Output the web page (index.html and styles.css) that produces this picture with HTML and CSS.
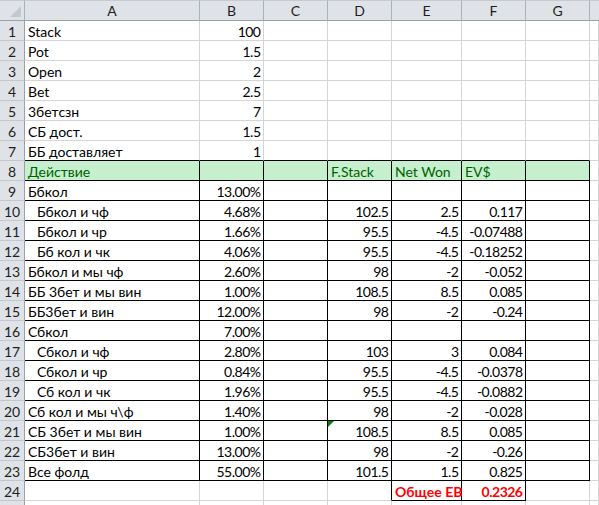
FILE: index.html
```html
<!DOCTYPE html>
<html>
<head>
<meta charset="utf-8">
<link rel="stylesheet" href="styles.css">
</head>
<body>
<div class="sheet">
  <div class="hc corner"><span class="tri"></span></div><div class="hc">A</div><div class="hc">B</div><div class="hc">C</div><div class="hc">D</div><div class="hc">E</div><div class="hc">F</div><div class="hc">G</div><div class="hc last"></div>

  <div class="rh">1</div><div class="c">Stack</div><div class="c r">100</div><div class="c"></div><div class="c"></div><div class="c"></div><div class="c"></div><div class="c"></div><div class="c"></div>
  <div class="rh">2</div><div class="c">Pot</div><div class="c r">1.5</div><div class="c"></div><div class="c"></div><div class="c"></div><div class="c"></div><div class="c"></div><div class="c"></div>
  <div class="rh">3</div><div class="c">Open</div><div class="c r">2</div><div class="c"></div><div class="c"></div><div class="c"></div><div class="c"></div><div class="c"></div><div class="c"></div>
  <div class="rh">4</div><div class="c">Bet</div><div class="c r">2.5</div><div class="c"></div><div class="c"></div><div class="c"></div><div class="c"></div><div class="c"></div><div class="c"></div>
  <div class="rh">5</div><div class="c">3бетсзн</div><div class="c r">7</div><div class="c"></div><div class="c"></div><div class="c"></div><div class="c"></div><div class="c"></div><div class="c"></div>
  <div class="rh">6</div><div class="c">СБ дост.</div><div class="c r">1.5</div><div class="c"></div><div class="c"></div><div class="c"></div><div class="c"></div><div class="c"></div><div class="c"></div>
  <div class="rh">7</div><div class="c bb">ББ доставляет</div><div class="c r bb">1</div><div class="c bb"></div><div class="c bb"></div><div class="c bb"></div><div class="c bb"></div><div class="c bb"></div><div class="c"></div>

  <div class="rh">8</div><div class="c t g">Действие</div><div class="c t g"></div><div class="c t g"></div><div class="c t g">F.Stack</div><div class="c t g">Net Won</div><div class="c t g">EV$</div><div class="c t g"></div><div class="c"></div>
  <div class="rh">9</div><div class="c t">Ббкол</div><div class="c t r">13.00%</div><div class="c t"></div><div class="c t"></div><div class="c t"></div><div class="c t"></div><div class="c t"></div><div class="c"></div>
  <div class="rh">10</div><div class="c t i">Ббкол и чф</div><div class="c t r">4.68%</div><div class="c t"></div><div class="c t r">102.5</div><div class="c t r">2.5</div><div class="c t r">0.117</div><div class="c t"></div><div class="c"></div>
  <div class="rh">11</div><div class="c t i">Ббкол и чр</div><div class="c t r">1.66%</div><div class="c t"></div><div class="c t r">95.5</div><div class="c t r">-4.5</div><div class="c t r">-0.07488</div><div class="c t"></div><div class="c"></div>
  <div class="rh">12</div><div class="c t i">Бб кол и чк</div><div class="c t r">4.06%</div><div class="c t"></div><div class="c t r">95.5</div><div class="c t r">-4.5</div><div class="c t r">-0.18252</div><div class="c t"></div><div class="c"></div>
  <div class="rh">13</div><div class="c t">Ббкол и мы чф</div><div class="c t r">2.60%</div><div class="c t"></div><div class="c t r">98</div><div class="c t r">-2</div><div class="c t r">-0.052</div><div class="c t"></div><div class="c"></div>
  <div class="rh">14</div><div class="c t">ББ 3бет и мы вин</div><div class="c t r">1.00%</div><div class="c t"></div><div class="c t r">108.5</div><div class="c t r">8.5</div><div class="c t r">0.085</div><div class="c t"></div><div class="c"></div>
  <div class="rh">15</div><div class="c t">ББ3бет и вин</div><div class="c t r">12.00%</div><div class="c t"></div><div class="c t r">98</div><div class="c t r">-2</div><div class="c t r">-0.24</div><div class="c t"></div><div class="c"></div>
  <div class="rh">16</div><div class="c t">Сбкол</div><div class="c t r">7.00%</div><div class="c t"></div><div class="c t"></div><div class="c t"></div><div class="c t"></div><div class="c t"></div><div class="c"></div>
  <div class="rh">17</div><div class="c t i">Сбкол и чф</div><div class="c t r">2.80%</div><div class="c t"></div><div class="c t r">103</div><div class="c t r">3</div><div class="c t r">0.084</div><div class="c t"></div><div class="c"></div>
  <div class="rh">18</div><div class="c t i">Сбкол и чр</div><div class="c t r">0.84%</div><div class="c t"></div><div class="c t r">95.5</div><div class="c t r">-4.5</div><div class="c t r">-0.0378</div><div class="c t"></div><div class="c"></div>
  <div class="rh">19</div><div class="c t i">Сб кол и чк</div><div class="c t r">1.96%</div><div class="c t"></div><div class="c t r">95.5</div><div class="c t r">-4.5</div><div class="c t r">-0.0882</div><div class="c t"></div><div class="c"></div>
  <div class="rh">20</div><div class="c t">Сб кол и мы ч\ф</div><div class="c t r">1.40%</div><div class="c t"></div><div class="c t r">98</div><div class="c t r">-2</div><div class="c t r">-0.028</div><div class="c t"></div><div class="c"></div>
  <div class="rh">21</div><div class="c t">СБ 3бет и мы вин</div><div class="c t r">1.00%</div><div class="c t"></div><div class="c t r">108.5<span class="flag"></span></div><div class="c t r">8.5</div><div class="c t r">0.085</div><div class="c t"></div><div class="c"></div>
  <div class="rh">22</div><div class="c t">СБ3бет и вин</div><div class="c t r">13.00%</div><div class="c t"></div><div class="c t r">98</div><div class="c t r">-2</div><div class="c t r">-0.26</div><div class="c t"></div><div class="c"></div>
  <div class="rh">23</div><div class="c t">Все фолд</div><div class="c t r">55.00%</div><div class="c t"></div><div class="c t r">101.5</div><div class="c t r">1.5</div><div class="c t r">0.825</div><div class="c t"></div><div class="c"></div>
  <div class="rh">24</div><div class="c"></div><div class="c"></div><div class="c"></div><div class="c br"></div><div class="c t red">Общее ЕВ</div><div class="c t r red">0.2326</div><div class="c"></div><div class="c"></div>
  <div class="rh"></div><div class="c"></div><div class="c"></div><div class="c"></div><div class="c"></div><div class="c"></div><div class="c"></div><div class="c"></div><div class="c"></div>
</div>
</body>
</html>
```

FILE: styles.css
```css
html, body {
  margin: 0;
  padding: 0;
  background: #ffffff;
  overflow: hidden;
}

.sheet {
  display: grid;
  grid-template-columns: 25px 175px 64px 64px 64px 70px 64px 64px 1fr;
  grid-template-rows: 21px;
  grid-auto-rows: 20px;
  font-family: Lato, "Noto Sans", sans-serif;
  font-size: 14px;
  color: #000;
}

.hc {
  box-sizing: border-box;
  background: #dfe3e8;
  border-top: 1px solid #c6cbd1;
  border-right: 1px solid #aab1ba;
  border-bottom: 1px solid #9aa1aa;
  text-align: center;
  line-height: 20px;
  color: #1e1e1e;
  position: relative;
}

.hc.last {
  border-right: none;
}

.corner .tri {
  position: absolute;
  right: 3px;
  bottom: 3px;
  width: 0;
  height: 0;
  border-left: 11px solid transparent;
  border-bottom: 11px solid #c3c8ce;
}

.rh {
  box-sizing: border-box;
  background: #dfe3e8;
  border-right: 1px solid #9aa1aa;
  border-bottom: 1px solid #c3c8ce;
  text-align: center;
  padding-top: 1px;
  line-height: 19px;
  color: #1e1e1e;
}

.c {
  box-sizing: border-box;
  border-right: 1px solid #d4d4d4;
  border-bottom: 1px solid #d4d4d4;
  padding: 1px 2px 0 3px;
  line-height: 19px;
  white-space: nowrap;
  position: relative;
}

.r {
  text-align: right;
  letter-spacing: -0.5px;
  padding-right: 2.5px;
}

.i {
  padding-left: 12px;
}

.bb {
  border-bottom-color: #000;
}

.br {
  border-right-color: #000;
}

.t {
  border-right-color: #000;
  border-bottom-color: #000;
}

.g {
  background: #c6efce;
  color: #006100;
}

.red {
  color: #ff0000;
  font-weight: bold;
}

.flag {
  position: absolute;
  left: 0;
  top: 0;
  width: 0;
  height: 0;
  border-top: 6px solid #107c10;
  border-right: 6px solid transparent;
}
```
